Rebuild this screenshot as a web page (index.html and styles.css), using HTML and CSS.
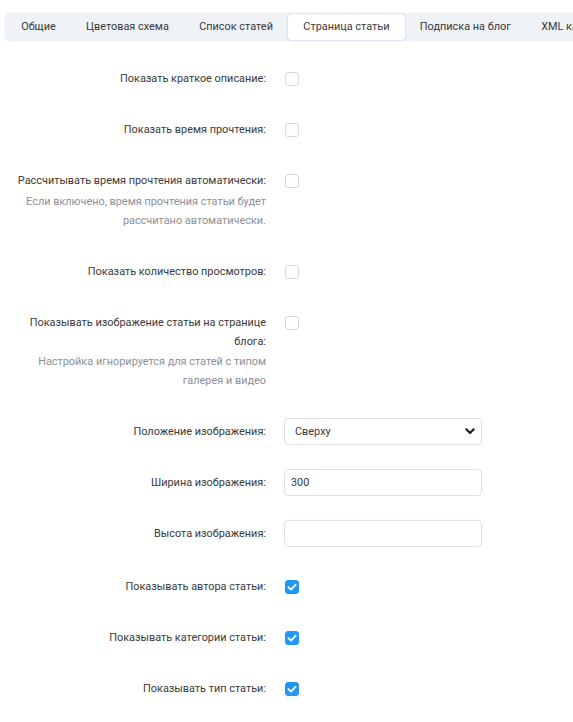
FILE: index.html
```html
<!DOCTYPE html>
<html lang="ru">
<head>
<meta charset="utf-8">
<link rel="stylesheet" href="styles.css">
</head>
<body>
<div class="tabs">
  <div class="tab">Общие</div>
  <div class="tab">Цветовая схема</div>
  <div class="tab">Список статей</div>
  <div class="tab active">Страница статьи</div>
  <div class="tab">Подписка на блог</div>
  <div class="tab">XML карта сайта</div>
</div>

<form class="form">
  <div class="row">
    <div class="label"><div class="title">Показать краткое описание:</div></div>
    <div class="control"><span class="check"></span></div>
  </div>
  <div class="row">
    <div class="label"><div class="title">Показать время прочтения:</div></div>
    <div class="control"><span class="check"></span></div>
  </div>
  <div class="row">
    <div class="label">
      <div class="title">Рассчитывать время прочтения автоматически:</div>
      <div class="hint">Если включено, время прочтения статьи будет рассчитано автоматически.</div>
    </div>
    <div class="control"><span class="check"></span></div>
  </div>
  <div class="row">
    <div class="label"><div class="title">Показать количество просмотров:</div></div>
    <div class="control"><span class="check"></span></div>
  </div>
  <div class="row">
    <div class="label">
      <div class="title">Показывать изображение статьи на странице блога:</div>
      <div class="hint">Настройка игнорируется для статей с типом галерея и видео</div>
    </div>
    <div class="control"><span class="check"></span></div>
  </div>
  <div class="row">
    <div class="label"><div class="title">Положение изображения:</div></div>
    <div class="control">
      <div class="select">
        <span>Сверху</span>
        <svg class="chev" width="10" height="7" viewBox="0 0 10 7"><path d="M1.3 1.3 L5 5 L8.7 1.3" fill="none" stroke="#222" stroke-width="2.2" stroke-linecap="round" stroke-linejoin="round"/></svg>
      </div>
    </div>
  </div>
  <div class="row">
    <div class="label"><div class="title">Ширина изображения:</div></div>
    <div class="control"><div class="input">300</div></div>
  </div>
  <div class="row">
    <div class="label"><div class="title">Высота изображения:</div></div>
    <div class="control"><div class="input"></div></div>
  </div>
  <div class="row checked-first">
    <div class="label"><div class="title">Показывать автора статьи:</div></div>
    <div class="control"><span class="check on"><svg width="14" height="14" viewBox="0 0 14 14"><path d="M3.4 7.2 L6 9.6 L10.7 4.6" fill="none" stroke="#fff" stroke-width="1.8" stroke-linecap="round" stroke-linejoin="round"/></svg></span></div>
  </div>
  <div class="row">
    <div class="label"><div class="title">Показывать категории статьи:</div></div>
    <div class="control"><span class="check on"><svg width="14" height="14" viewBox="0 0 14 14"><path d="M3.4 7.2 L6 9.6 L10.7 4.6" fill="none" stroke="#fff" stroke-width="1.8" stroke-linecap="round" stroke-linejoin="round"/></svg></span></div>
  </div>
  <div class="row">
    <div class="label"><div class="title">Показывать тип статьи:</div></div>
    <div class="control"><span class="check on"><svg width="14" height="14" viewBox="0 0 14 14"><path d="M3.4 7.2 L6 9.6 L10.7 4.6" fill="none" stroke="#fff" stroke-width="1.8" stroke-linecap="round" stroke-linejoin="round"/></svg></span></div>
  </div>
</form>
</body>
</html>
```

FILE: styles.css
```css
html, body {
  margin: 0;
  padding: 0;
  background: #fff;
  overflow: hidden;
}
body {
  font-family: Roboto, "Liberation Sans", sans-serif;
  font-size: 10.9px;
  color: #3a3a3a;
  width: 573px;
  height: 722px;
}
.tabs {
  display: flex;
  margin: 13px 0 0 5px;
  padding: 1px;
  height: 26px;
  background: #eff2f7;
  border-radius: 5px 0 0 5px;
  box-shadow: 0 0 1px rgba(120, 130, 160, 0.35);
  white-space: nowrap;
  overflow: hidden;
}
.tab {
  flex: none;
  padding: 0 15.2px;
  line-height: 26px;
  color: #3a3a3a;
  border-radius: 4px;
}
.tab.active {
  background: #fff;
  box-shadow: 0 0 2px rgba(110, 120, 170, 0.45);
}
.form {
  margin-top: 24px;
  display: flex;
  flex-direction: column;
  gap: 24px;
}
.row {
  display: flex;
  min-height: 27px;
}
.row.checked-first {
  margin-top: 2px;
}
.label {
  width: 250px;
  margin-left: 16px;
  padding: 4px 0;
  text-align: right;
  line-height: 19px;
}
.title {
  color: #3a3a3a;
}
.hint {
  margin-top: 1.5px;
  color: #8c8f96;
}
.control {
  margin-left: 18px;
  display: flex;
  align-items: flex-start;
}
.check {
  display: block;
  box-sizing: border-box;
  width: 14px;
  height: 14px;
  margin: 7px 0 0 1px;
  border: 1px solid #d3d8e6;
  border-radius: 3px;
  background: #fff;
}
.check.on {
  background: #2196f3;
  border-color: #2196f3;
}
.check.on svg {
  display: block;
  margin: -1px;
}
.select, .input {
  box-sizing: border-box;
  width: 198px;
  height: 27px;
  border: 1px solid #dbe0ec;
  border-radius: 4px;
  background: #fff;
  color: #3a3a3a;
  line-height: 25px;
}
.select {
  display: flex;
  justify-content: space-between;
  align-items: center;
  padding: 0 6px 0 10px;
}
.input {
  padding: 0 6px;
}
.chev {
  display: block;
}
```
